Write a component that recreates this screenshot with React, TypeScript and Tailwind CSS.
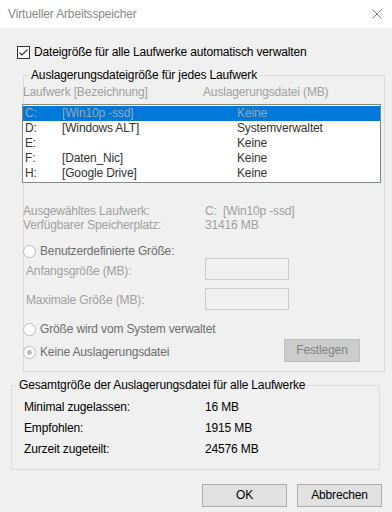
import React from "react";

interface Drive {
  letter: string;
  label: string;
  size: string;
}

const DRIVES: Drive[] = [
  { letter: "C:", label: "[Win10p -ssd]", size: "Keine" },
  { letter: "D:", label: "[Windows ALT]", size: "Systemverwaltet" },
  { letter: "E:", label: "", size: "Keine" },
  { letter: "F:", label: "[Daten_Nic]", size: "Keine" },
  { letter: "H:", label: "[Google Drive]", size: "Keine" },
];

function Radio({ label, checked = false }: { label: string; checked?: boolean }) {
  return (
    <div className="flex items-center h-[15px] -ml-[1px]">
      <span className="w-[13px] h-[13px] rounded-full border border-[#bcbcbc] bg-white flex items-center justify-center">
        {checked && <span className="w-[5px] h-[5px] rounded-full bg-[#bcbcbc]" />}
      </span>
      <span className="ml-[4px] text-[#6d6d6d]">{label}</span>
    </div>
  );
}

export default function App() {
  return (
    <div className="w-[392px] h-[512px] bg-[#f0f0f0] flex flex-col overflow-hidden font-['Liberation_Sans',Arial,sans-serif] text-[12px] leading-[15px] tracking-[-0.15px] text-black">
      {/* title bar */}
      <div className="h-[28px] bg-white flex items-center justify-between pl-[8px] pr-[10px]">
        <span className="text-[#888888]">Virtueller Arbeitsspeicher</span>
        <svg width="10" height="10" viewBox="0 0 10 10" className="text-[#7a7a7a]">
          <path d="M0.5 0.5 L9.5 9.5 M9.5 0.5 L0.5 9.5" stroke="currentColor" strokeWidth="1" fill="none" />
        </svg>
      </div>

      {/* auto manage checkbox */}
      <div className="flex items-center h-[15px] mt-[17px] ml-[17px]">
        <span className="w-[13px] h-[13px] border border-[#333333] bg-white flex items-center justify-center">
          <svg width="11" height="11" viewBox="0 0 11 11">
            <path d="M1.5 5.5 L4 8 L9.5 2.5" stroke="#333333" strokeWidth="1.2" fill="none" />
          </svg>
        </span>
        <span className="ml-[4px]">Dateigröße für alle Laufwerke automatisch verwalten</span>
      </div>

      {/* per drive group */}
      <fieldset className="mt-[8px] ml-[23px] w-[362px] border border-[#dcdcdc] pb-[9px]">
        <legend className="ml-[5px] px-[2px] leading-[15px]">Auslagerungsdateigröße für jedes Laufwerk</legend>

        <div className="flex mt-[2px] -ml-[1px] text-[#a0a0a0]">
          <span className="w-[180px]">Laufwerk [Bezeichnung]</span>
          <span>Auslagerungsdatei (MB)</span>
        </div>

        <div className="mt-[4px] -ml-[2px] w-[359px] border border-[#828790] bg-white py-[1px]">
          {DRIVES.map((d, i) => (
            <div
              key={d.letter}
              className={`flex h-[15px] items-center pl-[2px] ${
                i === 0 ? "bg-[#0078d7] text-[#9aa6b4]" : "text-[#333333]"
              }`}
            >
              <span className="w-[37px]">{d.letter}</span>
              <span className="w-[175px]">{d.label}</span>
              <span>{d.size}</span>
            </div>
          ))}
        </div>

        <div className="mt-[21px] -ml-[1px] leading-[14px] text-[#a0a0a0]">
          <div className="flex">
            <span className="w-[182px]">Ausgewähltes Laufwerk:</span>
            <span>C:&nbsp; [Win10p -ssd]</span>
          </div>
          <div className="flex">
            <span className="w-[182px]">Verfügbarer Speicherplatz:</span>
            <span>31416 MB</span>
          </div>
        </div>

        <div className="mt-[12px]">
          <Radio label="Benutzerdefinierte Größe:" />
        </div>

        <div className="flex items-start -mt-[1px]">
          <span className="w-[179px] ml-[2px] mt-[6px] text-[#a0a0a0]">Anfangsgröße (MB):</span>
          <span className="w-[84px] h-[22px] border border-[#cccccc] bg-[#f0f0f0]" />
        </div>
        <div className="flex items-start mt-[8px]">
          <span className="w-[179px] ml-[2px] mt-[5px] text-[#a0a0a0]">Maximale Größe (MB):</span>
          <span className="w-[84px] h-[22px] border border-[#cccccc] bg-[#f0f0f0]" />
        </div>

        <div className="mt-[12px]">
          <Radio label="Größe wird vom System verwaltet" />
        </div>

        <div className="flex items-start mt-[2px]">
          <div className="w-[260px] mt-[6px]">
            <Radio label="Keine Auslagerungsdatei" checked />
          </div>
          <button className="w-[76px] h-[23px] border border-[#bfbfbf] bg-[#cccccc] text-[#838383]">
            Festlegen
          </button>
        </div>
      </fieldset>

      {/* totals group */}
      <fieldset className="mt-[6px] ml-[11px] w-[369px] border border-[#dcdcdc] pb-[9px]">
        <legend className="ml-[5px] px-[2px] leading-[15px]">Gesamtgröße der Auslagerungsdatei für alle Laufwerke</legend>
        <div className="mt-[4px] ml-[12px] leading-[21px]">
          <div className="flex">
            <span className="w-[181px]">Minimal zugelassen:</span>
            <span>16 MB</span>
          </div>
          <div className="flex">
            <span className="w-[181px]">Empfohlen:</span>
            <span>1915 MB</span>
          </div>
          <div className="flex">
            <span className="w-[181px]">Zurzeit zugeteilt:</span>
            <span>24576 MB</span>
          </div>
        </div>
      </fieldset>

      {/* dialog buttons */}
      <div className="flex justify-end gap-[10px] pr-[10px] mt-[14px]">
        <button className="w-[85px] h-[23px] border border-[#adadad] bg-[#e1e1e1]">OK</button>
        <button className="w-[85px] h-[23px] border border-[#adadad] bg-[#e1e1e1]">Abbrechen</button>
      </div>
    </div>
  );
}
